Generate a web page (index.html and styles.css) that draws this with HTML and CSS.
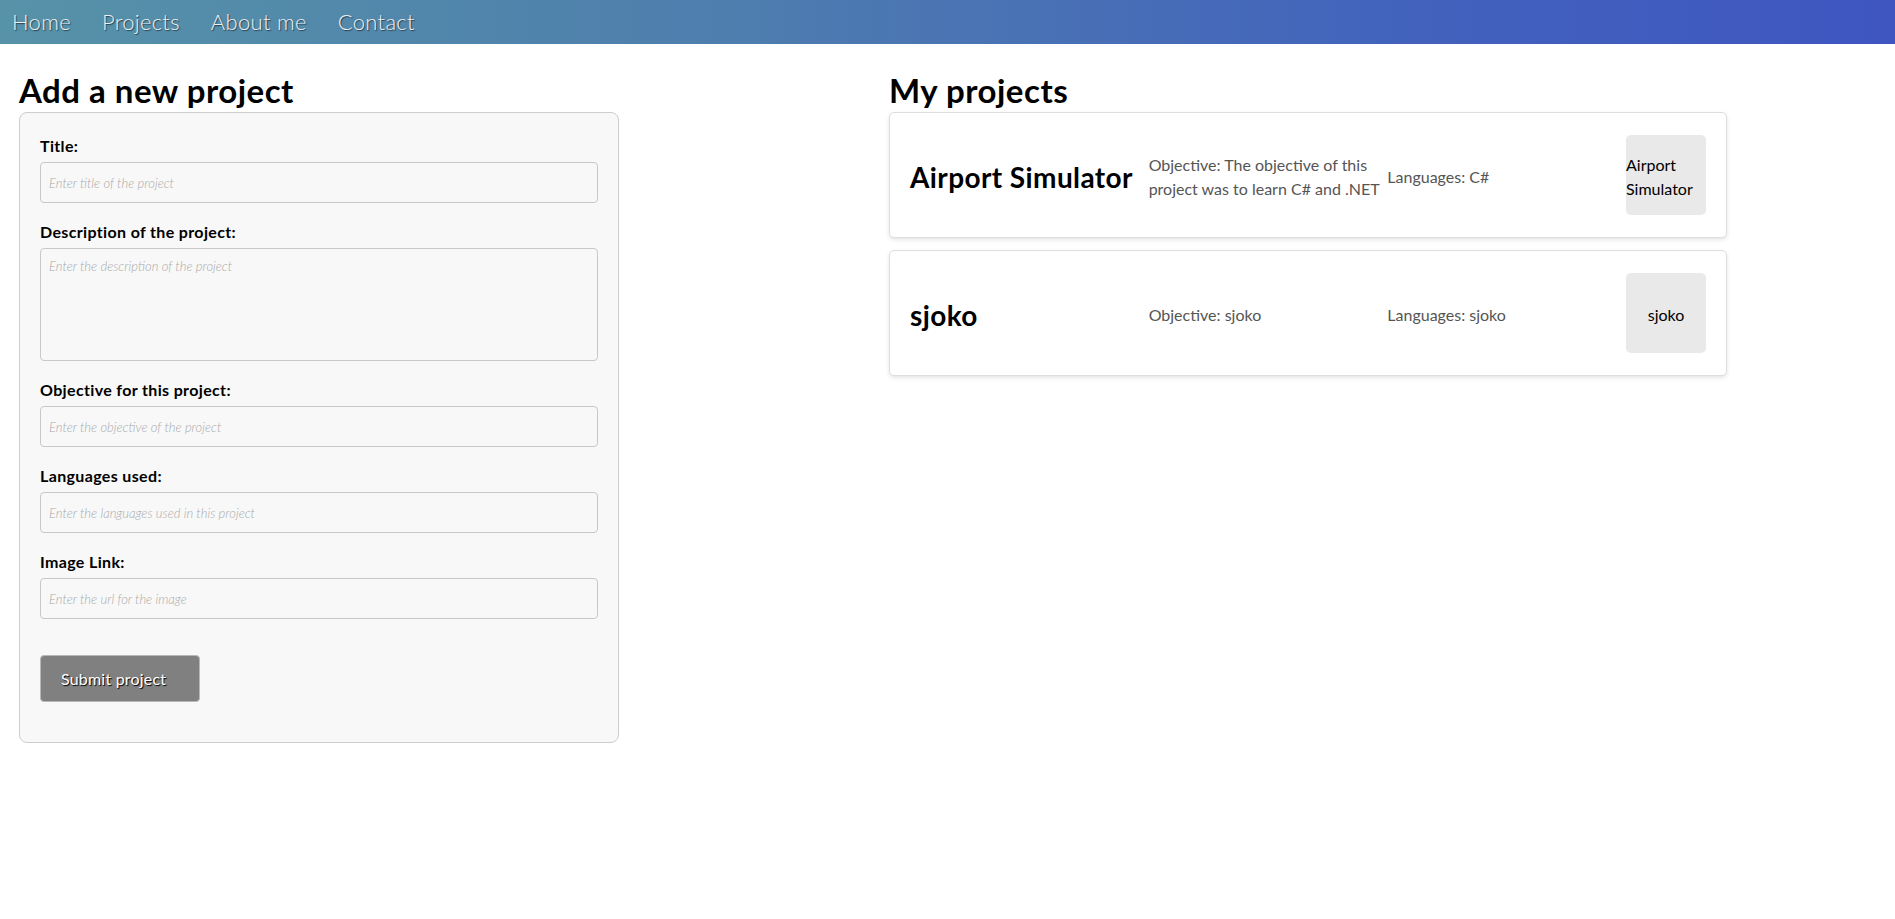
FILE: index.html
```html
<!DOCTYPE html>
<html lang="en">
<head>
<meta charset="utf-8">
<title>Projects</title>
<link rel="stylesheet" href="styles.css">
</head>
<body>
<nav class="topnav">
  <a class="navlink" href="#">Home</a>
  <a class="navlink" href="#">Projects</a>
  <a class="navlink" href="#">About me</a>
  <a class="navlink" href="#">Contact</a>
</nav>
<main class="page">
  <section class="col-form">
    <h1 class="heading">Add a new project</h1>
    <form class="form-box">
      <label class="field-label" for="title">Title:</label>
      <input class="field-input" id="title" type="text" placeholder="Enter title of the project">
      <label class="field-label" for="desc">Description of the project:</label>
      <textarea class="field-input field-area" id="desc" placeholder="Enter the description of the project"></textarea>
      <label class="field-label" for="obj">Objective for this project:</label>
      <input class="field-input" id="obj" type="text" placeholder="Enter the objective of the project">
      <label class="field-label" for="lang">Languages used:</label>
      <input class="field-input" id="lang" type="text" placeholder="Enter the languages used in this project">
      <label class="field-label" for="img">Image Link:</label>
      <input class="field-input" id="img" type="text" placeholder="Enter the url for the image">
      <button class="submit-btn" type="button">Submit project</button>
    </form>
  </section>
  <section class="col-list">
    <h1 class="heading">My projects</h1>
    <div class="card">
      <h2 class="card-title">Airport Simulator</h2>
      <p class="card-text">Objective: The objective of this project was to learn C# and .NET</p>
      <p class="card-text">Languages: C#</p>
      <div class="card-img"><span class="card-img-text">Airport Simulator</span></div>
    </div>
    <div class="card">
      <h2 class="card-title">sjoko</h2>
      <p class="card-text">Objective: sjoko</p>
      <p class="card-text">Languages: sjoko</p>
      <div class="card-img"><span class="card-img-text">sjoko</span></div>
    </div>
  </section>
</main>
</body>
</html>
```
FILE: styles.css
```css
* { box-sizing: border-box; }

body {
  margin: 0;
  font-family: Lato, "Open Sans", sans-serif;
  color: #000;
  background: #fff;
}

.topnav {
  height: 44px;
  display: flex;
  align-items: center;
  padding-left: 12px;
  gap: 31px;
  background: linear-gradient(to right, #5692a8, #4f80ad 35%, #4262bd 75%, #3f56c1);
}

.navlink {
  font-size: 22px;
  font-weight: 300;
  letter-spacing: 0.3px;
  color: #eef0f2;
  text-decoration: none;
  text-shadow: 1px 1px 1px rgba(0, 0, 0, 0.55);
  line-height: 44px;
}

.page {
  display: flex;
  align-items: flex-start;
  padding: 0 19px;
  gap: 270px;
}

.col-form { width: 600px; }
.col-list { width: 838px; }

.heading {
  margin: 26px 0 1px;
  font-size: 33px;
  line-height: 41px;
  font-weight: 700;
  letter-spacing: 0.5px;
}

.form-box {
  display: flex;
  flex-direction: column;
  align-items: flex-start;
  background: #f8f8f8;
  border: 1px solid #cdcdcd;
  border-radius: 8px;
  padding: 22px 20px 20px;
}

.field-label {
  font-size: 16px;
  font-weight: 700;
  line-height: 22px;
  letter-spacing: 0.35px;
  margin-bottom: 5px;
}

.field-input {
  width: 100%;
  height: 41px;
  margin: 0 0 18px;
  padding: 0 8px;
  background: #f8f8f8;
  border: 1px solid #c8c8c8;
  border-radius: 4px;
  font-family: Lato, sans-serif;
  font-size: 13px;
  font-style: italic;
}

.field-input::placeholder {
  color: #aaaaaa;
  font-style: italic;
  font-weight: 300;
}

.field-area {
  height: 113px;
  padding-top: 9px;
  resize: none;
}

.submit-btn {
  margin: 18px 0 20px;
  width: 160px;
  height: 47px;
  padding: 0 20px;
  text-align: left;
  background: #808080;
  border: 1px solid #b8b8b8;
  border-radius: 4px;
  color: #fff;
  font-family: Lato, sans-serif;
  font-size: 16px;
  letter-spacing: 0.2px;
  text-shadow: 1px 1px 1px #000;
}

.card {
  display: grid;
  grid-template-columns: 1fr 1fr 1fr 80px;
  align-items: center;
  background: #fff;
  border: 1px solid #dedede;
  border-radius: 5px;
  box-shadow: 0 2px 4px rgba(0, 0, 0, 0.1);
  padding: 22px 20px;
  margin-bottom: 12px;
}

.card-title {
  margin: 0;
  padding-top: 4px;
  font-size: 28px;
  font-weight: 700;
  line-height: 36px;
  letter-spacing: 0.4px;
  white-space: nowrap;
}

.card-text {
  margin: 0;
  padding: 4px 6px 0 0;
  font-size: 16px;
  line-height: 24px;
  color: #555;
}

.card-img {
  width: 80px;
  height: 80px;
  background: #e9e9e9;
  border-radius: 5px;
  display: flex;
  align-items: center;
  justify-content: center;
  font-size: 16px;
  line-height: 24px;
  color: #000;
}

.card-img-text {
  padding-top: 4px;
}
```
